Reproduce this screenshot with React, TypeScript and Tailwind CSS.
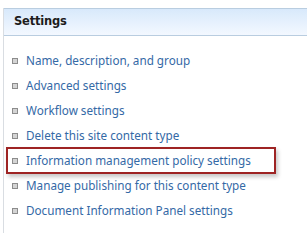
import React from 'react';

const links = [
  'Name, description, and group',
  'Advanced settings',
  'Workflow settings',
  'Delete this site content type',
  'Information management policy settings',
  'Manage publishing for this content type',
  'Document Information Panel settings',
];

function Bullet() {
  return (
    <span className="w-[6px] h-[6px] shrink-0 border border-[#8c8c8c] bg-[#d4d4d4]" />
  );
}

export default function App() {
  return (
    <div className="w-[307px] h-[233px] bg-white overflow-hidden pt-[8px]">
      <div className="ml-[3px] h-[225px] border-l border-[#d9dde2]">
        <div className="h-[28px] flex items-center pl-[10px] border-y border-[#b9cde0] bg-gradient-to-b from-[#d8e9fb] to-[#f3f8ff]">
          <span className="font-['DejaVu_Sans',sans-serif] font-bold text-[11.5px] text-[#1c1c1c] tracking-[-0.2px]">
            Settings
          </span>
        </div>
        <ul className="mt-[12px] flex flex-col font-['Noto_Sans',sans-serif] text-[11.7px] text-[#3469a6]">
          {links.map((l, i) => (
            <li key={l} className="relative h-[25px] flex items-center gap-[8px] pl-[8px]">
              <Bullet />
              <span className="leading-none">{l}</span>
              {i === 4 && (
                <span className="absolute left-[2px] top-[-1px] w-[270px] h-[27px] border-2 border-[#9e2424] shadow-[2px_3px_4px_rgba(0,0,0,0.22)]" />
              )}
            </li>
          ))}
        </ul>
      </div>
    </div>
  );
}
